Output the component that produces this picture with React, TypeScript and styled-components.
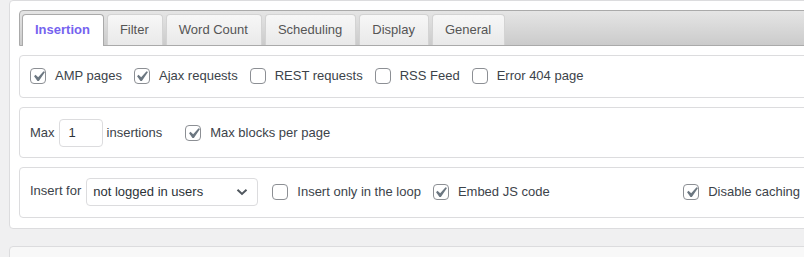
import React from 'react';
import styled, { createGlobalStyle } from 'styled-components';

const GlobalStyle = createGlobalStyle`
  html, body {
    margin: 0;
    padding: 0;
    background: #f0f0f1;
    overflow: hidden;
  }
  body {
    font-family: 'Liberation Sans', Arial, sans-serif;
    font-size: 13px;
    color: #3c434a;
  }
`;

const tabs = ['Insertion', 'Filter', 'Word Count', 'Scheduling', 'Display', 'General'];

const Check = ({ checked }: { checked?: boolean }) => (
  <SBox>
    {checked && (
      <svg viewBox='0 0 20 20' width='21' height='21'>
        <path d='M14.83 4.89l1.34.94-5.81 8.38H9.02L5.78 9.67l1.34-1.25 2.57 2.4z' fill='#6c7781' />
      </svg>
    )}
  </SBox>
);

const Option = ({ label, checked, push }: { label: string; checked?: boolean; push?: boolean }) => (
  <SOption $push={push}>
    <Check checked={checked} />
    <span>{label}</span>
  </SOption>
);

const App = () => {
  return (
    <SPage>
      <GlobalStyle />
      <SPanel>
        <STabBar>
          {tabs.map((t, i) => (
            <STab key={t} $active={i === 0}>
              {t}
            </STab>
          ))}
        </STabBar>

        <SRow $pad='12px 10px 13px'>
          <Option label='AMP pages' checked />
          <Option label='Ajax requests' checked />
          <Option label='REST requests' />
          <Option label='RSS Feed' />
          <Option label='Error 404 page' />
        </SRow>

        <SRow $pad='11px 10px 10px'>
          <SGroup $after={11} $gap={4}>
            <span>Max</span>
            <SInput>1</SInput>
            <span>insertions</span>
          </SGroup>
          <Option label='Max blocks per page' checked />
        </SRow>

        <SRow $pad='10px 10px 11px'>
          <SGroup $after={2} $gap={5}>
            <SSmallLabel>Insert for</SSmallLabel>
            <SSelect>
              <span>not logged in users</span>
              <svg width='12' height='8' viewBox='0 0 12 8'>
                <path d='M1.5 1.8 L6 6 L10.5 1.8' fill='none' stroke='#50575e' strokeWidth='2' />
              </svg>
            </SSelect>
          </SGroup>
          <Option label='Insert only in the loop' />
          <Option label='Embed JS code' checked />
          <Option label='Disable caching' checked push />
        </SRow>
      </SPanel>
      <SNextPanel />
    </SPage>
  );
};

export default App;

const SPage = styled.div`
  width: 821px;
`;

const SPanel = styled.div`
  margin-left: 9px;
  background: #fff;
  border: 1px solid #dcdcde;
  border-radius: 4px;
  padding: 9px 9px 10px;
  display: flex;
  flex-direction: column;
  gap: 9px;
`;

const SNextPanel = styled.div`
  margin: 17px 0 0 9px;
  height: 40px;
  background: #f8f8f8;
  border: 1px solid #dcdcde;
  border-radius: 4px;
`;

const STabBar = styled.div`
  display: flex;
  align-items: flex-end;
  box-sizing: border-box;
  height: 36px;
  padding: 3px 2px 0;
  border: 1px solid #aaa;
  border-radius: 4px 0 0 0;
  background: linear-gradient(#e5e5e5, #cbcbcb);
`;

const STab = styled.div<{ $active?: boolean }>`
  height: ${(p) => (p.$active ? '32px' : '31px')};
  margin-bottom: ${(p) => (p.$active ? '-1px' : '0')};
  margin-right: 3px;
  padding: 0 13px 2px 12px;
  display: flex;
  align-items: center;
  justify-content: center;
  box-sizing: border-box;
  border: 1px solid ${(p) => (p.$active ? '#aaa' : '#d3d3d3')};
  border-bottom: 0;
  border-radius: 4px 4px 0 0;
  background: ${(p) => (p.$active ? '#fff' : 'linear-gradient(#f7f7f7, #e9e9e9)')};
  color: ${(p) => (p.$active ? '#7563ef' : '#555')};
  font-weight: ${(p) => (p.$active ? 'bold' : 'normal')};
`;

const SRow = styled.div<{ $pad: string }>`
  display: flex;
  align-items: center;
  padding: ${(p) => p.$pad};
  border: 1px solid #dcdcde;
  border-radius: 4px;
  background: #fff;
  gap: 12px;
  line-height: 16px;
`;

const SGroup = styled.div<{ $after: number; $gap: number }>`
  display: flex;
  align-items: center;
  gap: ${(p) => p.$gap}px;
  margin-right: ${(p) => p.$after}px;
`;

const SSmallLabel = styled.span`
  margin-top: -3px;
`;

const SOption = styled.label<{ $push?: boolean }>`
  display: flex;
  align-items: center;
  gap: 9px;
  ${(p) => (p.$push ? 'margin-left: auto;' : '')}
`;

const SBox = styled.span`
  width: 16px;
  height: 16px;
  box-sizing: border-box;
  border: 1px solid #8c8f94;
  border-radius: 4px;
  display: flex;
  align-items: center;
  justify-content: center;
  svg {
    flex: none;
    margin: -3px;
  }
`;

const SInput = styled.div`
  width: 44px;
  height: 28px;
  box-sizing: border-box;
  border: 1px solid #dcdcde;
  border-radius: 4px;
  padding: 0 9px;
  display: flex;
  align-items: center;
  color: #2c3338;
`;

const SSelect = styled.div`
  width: 172px;
  height: 28px;
  box-sizing: border-box;
  border: 1px solid #dcdcde;
  border-radius: 4px;
  padding: 0 9px 0 6px;
  display: flex;
  align-items: center;
  justify-content: space-between;
  color: #2c3338;
`;
